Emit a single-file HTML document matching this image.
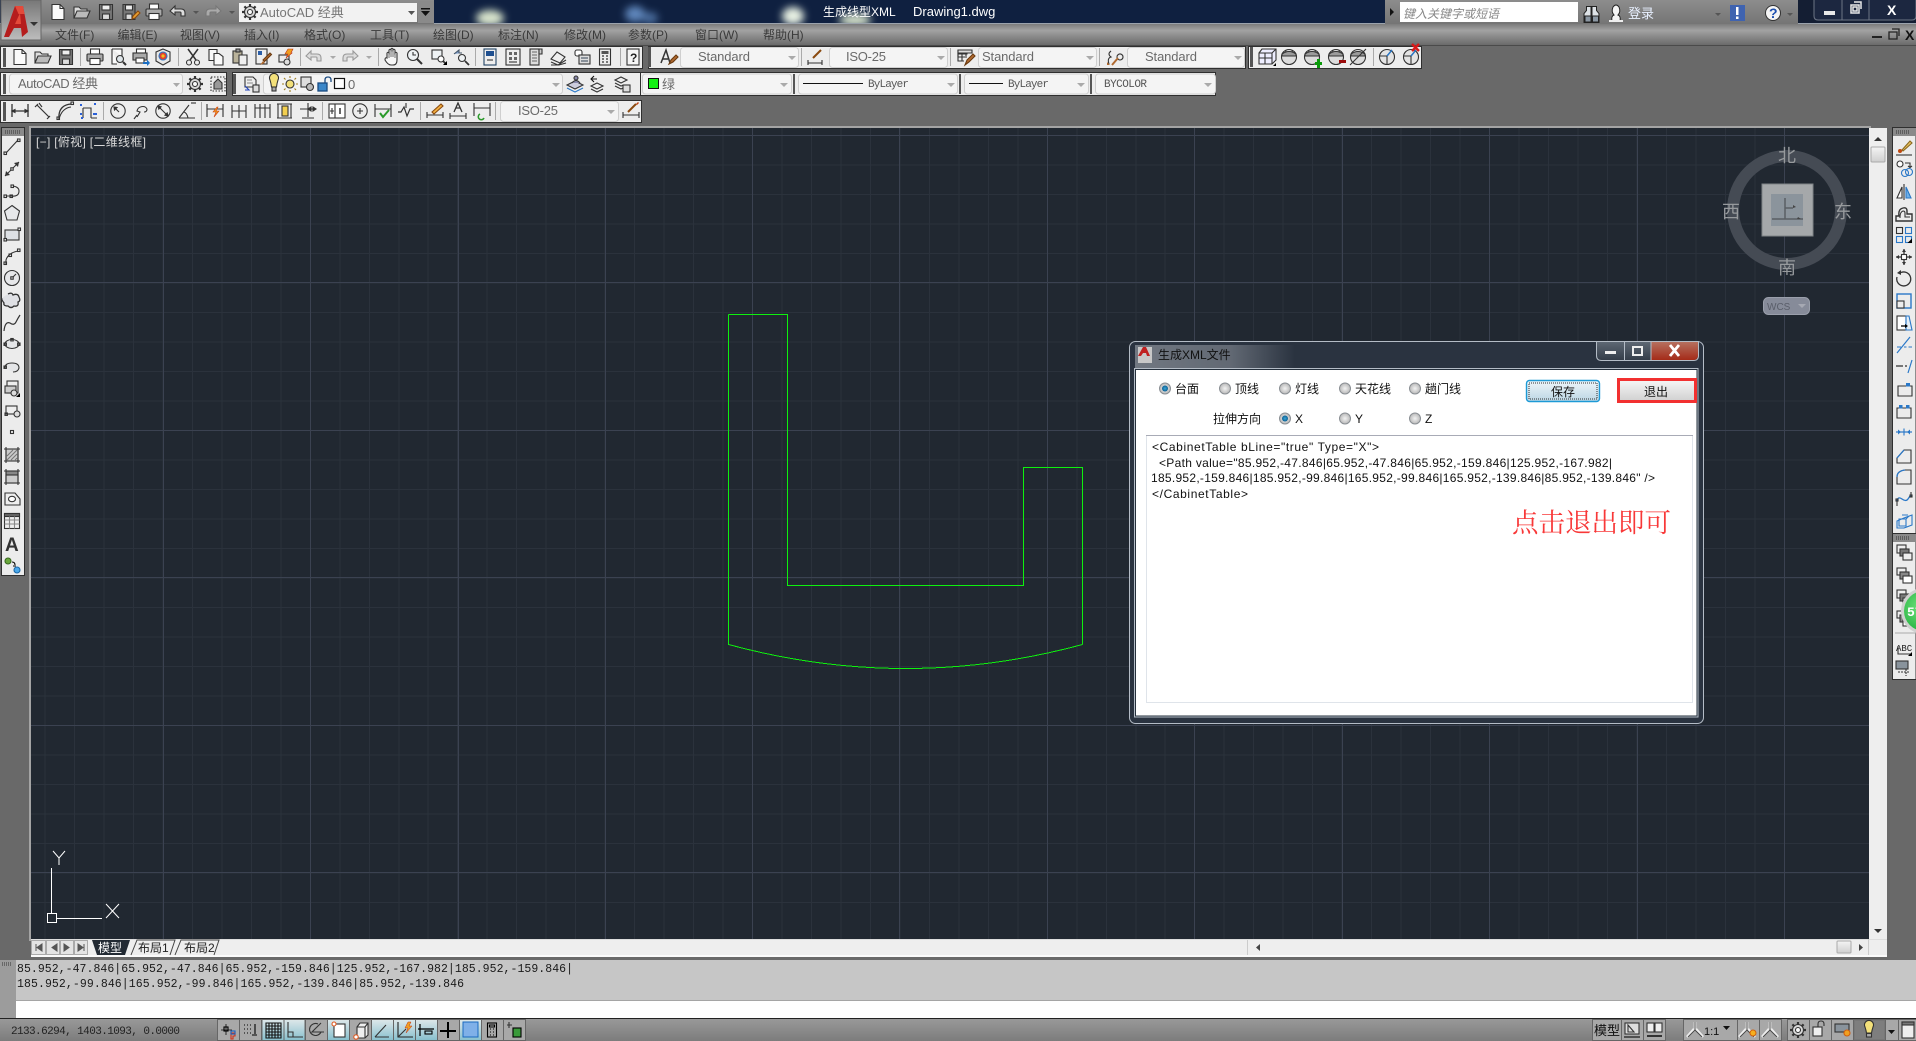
<!DOCTYPE html>
<html><head><meta charset="utf-8"><title>AutoCAD</title>
<style>
html,body{margin:0;padding:0;background:#696969;overflow:hidden}
svg{display:block}
text{font-family:"Liberation Sans","Noto Sans CJK SC",sans-serif;font-size:12px;stroke:none;white-space:pre}
.m{fill:#3a3a3a}
.c{fill:#6a6a6a;font-size:13px}
.mono{font-family:"Liberation Mono","Noto Sans CJK SC",monospace}
.i{fill:none;stroke:#333;stroke-width:1.1}
.b{fill:none;stroke:#2a78c8;stroke-width:1.2}
</style></head><body>
<svg xmlns="http://www.w3.org/2000/svg" width="1916" height="1041" viewBox="0 0 1916 1041">
<defs>
<linearGradient id="menu" x1="0" y1="0" x2="0" y2="1"><stop offset="0" stop-color="#7c7c7c"/><stop offset=".3" stop-color="#a2a2a2"/><stop offset="1" stop-color="#6a6a6a"/></linearGradient>
<linearGradient id="qat" x1="0" y1="0" x2="0" y2="1"><stop offset="0" stop-color="#8d8d8d"/><stop offset="1" stop-color="#757575"/></linearGradient>
<linearGradient id="logo" x1="0" y1="0" x2="0" y2="1"><stop offset="0" stop-color="#777"/><stop offset="1" stop-color="#bdbdbd"/></linearGradient>
<linearGradient id="st" x1="0" y1="0" x2="0" y2="1"><stop offset="0" stop-color="#9a9a9a"/><stop offset="1" stop-color="#7c7c7c"/></linearGradient>
<linearGradient id="on" x1="0" y1="0" x2="0" y2="1"><stop offset="0" stop-color="#dfe8ea"/><stop offset="1" stop-color="#86bfcd"/></linearGradient>
<linearGradient id="btn" x1="0" y1="0" x2="0" y2="1"><stop offset="0" stop-color="#f4f4f4"/><stop offset="1" stop-color="#cfcfcf"/></linearGradient>
<linearGradient id="btnb" x1="0" y1="0" x2="0" y2="1"><stop offset="0" stop-color="#eef6fa"/><stop offset="1" stop-color="#bcd6e4"/></linearGradient>
<linearGradient id="wb" x1="0" y1="0" x2="0" y2="1"><stop offset="0" stop-color="#5e6874"/><stop offset="1" stop-color="#333c48"/></linearGradient>
<linearGradient id="wr" x1="0" y1="0" x2="0" y2="1"><stop offset="0" stop-color="#b5705f"/><stop offset="1" stop-color="#a52b18"/></linearGradient>
<linearGradient id="glow" x1="0" y1="0" x2="1" y2="0"><stop offset="0" stop-color="#c8ccd2" stop-opacity=".45"/><stop offset=".6" stop-color="#c8ccd2" stop-opacity=".35"/><stop offset="1" stop-color="#c8ccd2" stop-opacity="0"/></linearGradient>
<radialGradient id="radio" cx=".5" cy=".5" r=".5"><stop offset="0" stop-color="#f2f2f2"/><stop offset="1" stop-color="#b8b8b8"/></radialGradient>
<radialGradient id="radon" cx=".5" cy=".5" r=".5"><stop offset="0" stop-color="#39a5d8"/><stop offset="1" stop-color="#0c5f92"/></radialGradient>
<radialGradient id="grn" cx=".4" cy=".4" r=".6"><stop offset="0" stop-color="#6fe07a"/><stop offset="1" stop-color="#28b544"/></radialGradient>
<filter id="bl" x="-50%" y="-50%" width="200%" height="200%"><feGaussianBlur stdDeviation="4"/></filter>

<!-- general icons centred at 0,0 -->
<g id="doc"><path d="M-6-7.5h8l4 4V7.5H-6z" fill="#fafafa"/><path d="M2-7.5v4h4"/></g>
<g id="open"><path d="M-8 6V-5h5l2 2h6v2" fill="#ddd"/><path d="M-8 6l3-7H8L5 6z" fill="#bbb"/></g>
<g id="save"><path d="M-6.5-7.5h13v15h-13z" fill="#777"/><rect x="-4" y="-7" width="8" height="5" fill="#eee"/><rect x="-3.5" y="2" width="7" height="5.5" fill="#ddd"/></g>
<g id="saveas"><path d="M-7-7.5H5v15H-7z" fill="#777"/><rect x="-4.5" y="-7" width="7" height="5" fill="#eee"/><rect x="-4" y="2" width="6" height="5.5" fill="#ddd"/><path d="M2 7l1-3 5-5 2 2-5 5z" fill="#e8a030" stroke="#8a4a10"/></g>
<g id="print"><rect x="-4.5" y="-8" width="9" height="5" fill="#fff"/><rect x="-8" y="-3" width="16" height="7" rx="1" fill="#aaa"/><rect x="-5" y="1.5" width="10" height="6" fill="#fff"/></g>
<g id="prev"><path d="M-6-8H4v7M-6-8V7h5" fill="#fafafa"/><circle cx="2" cy="2" r="3.5" fill="#dfe6ea"/><path d="M5 5l3 3" stroke-width="2"/></g>
<g id="pub"><rect x="-4.5" y="-8" width="9" height="4" fill="#fff"/><rect x="-8" y="-4" width="14" height="7" fill="#aaa"/><rect x="-5" y="1" width="8" height="5" fill="#fff"/><path d="M2 5h4V2.5L9 6 6 9V7H2z" fill="#1b6fc4" stroke="none"/></g>
<g id="p3d"><path d="M0-8l7 3v9L0 8-7 4v-9z" fill="#e8e8e8"/><circle cy="-1" r="4" fill="#e04030" stroke="#2a78c8"/><circle cy="-1" r="1.6" fill="#f0c020" stroke="none"/></g>
<g id="cut"><path d="M-5-8L3 3M5-8L-3 3" stroke-width="1.5"/><circle cx="-4" cy="5.5" r="2.5"/><circle cx="4" cy="5.5" r="2.5"/></g>
<g id="copy"><path d="M-7-7.5h8v11h-8z" fill="#fafafa"/><path d="M-2-3.5h5l4 3V8H-2z" fill="#fafafa"/></g>
<g id="paste"><rect x="-7" y="-6" width="9" height="12" fill="#b9b29a"/><rect x="-4" y="-8" width="4" height="3" fill="#999"/><path d="M-1-2h8V8h-8z" fill="#eee"/></g>
<g id="match"><rect x="-7" y="-8" width="11" height="15" fill="#eee"/><rect x="-5" y="-6" width="4" height="4" fill="#2a5ea8" stroke="none"/><path d="M0 3l7-7 1.5 1.5-7 7z" fill="#b06a30" stroke="#6a3a10"/><path d="M-3 8l3-4 2 2z" fill="#b06a30" stroke="none"/></g>
<g id="bled"><rect x="-7" y="-2" width="10" height="7"/><circle cx="1" cy="5" r="3" fill="#ddd"/><path d="M2-8L-1-3h3l-2 4 6-5H5l2-4z" fill="#f0a020" stroke="#c03010" stroke-width=".6"/></g>
<g id="und" stroke="#999"><path d="M-8-1l5-5v3h6q4 0 4 4v3h-4V1q0-1-1-1h-5v3z" fill="#ddd"/></g>
<g id="red" stroke="#999"><path d="M8-1L3-6v3H-3q-4 0-4 4v3h4V1q0-1 1-1h5v3z" fill="#ddd"/></g>
<g id="undD"><path d="M-8-1l5-5v3h6q4 0 4 4v3h-4V1q0-1-1-1h-5v3z" fill="#ddd"/></g>
<g id="redD" stroke="#777"><path d="M8-1L3-6v3H-3q-4 0-4 4v3h4V1q0-1 1-1h5v3z" fill="#aaa"/></g>
<g id="hand"><path d="M-5 1v-5q1-1.500 2 0v-3q1-1.500 2 0V-8q1-1.500 2 0v1q1-1.500 2 0v3q1-1.500 2 0V3q0 5-4 5H-1Q-4 8-7 3-7 0-5 1z" fill="#f6f6f6"/><path d="M-3-4v5M-1-7v7M1-7v7M3-4v5" stroke-width=".7"/></g>
<g id="zrt"><circle cx="-2" cy="-2" r="5.5" fill="#eef2f4"/><path d="M-2-5v3h3"/><path d="M2 2l5 5" stroke-width="2"/></g>
<g id="zwn"><rect x="-7" y="-7" width="10" height="9" fill="#eef2f4"/><circle cx="2" cy="2" r="3" fill="#fff"/><path d="M4 4l3 3" stroke-width="1.8"/><path d="M8 8V4l-4 4z" fill="#000" stroke="none"/></g>
<g id="zpr"><path d="M-7-3l5-4v3h3" fill="#7a9ac8" stroke="#456"/><circle cx="1" cy="1" r="3.5" fill="#eef2f4"/><path d="M4 4l4 4" stroke-width="1.8"/></g>
<g id="prop"><rect x="-6" y="-8" width="12" height="16" fill="#eee" stroke="#246"/><rect x="-4" y="-6" width="8" height="5" fill="#1e4f90" stroke="none"/><path d="M-3 3h6" stroke="#333"/></g>
<g id="dc"><rect x="-7" y="-8" width="14" height="16" fill="#eee"/><path d="M-4-5h3v3h-3zM1-5h3v3H1zM-4 0h3v3h-3zM1 0h3v3H1z" fill="#666" stroke="none"/><path d="M-4 5h8"/></g>
<g id="tp"><rect x="-6" y="-8" width="9" height="16" fill="#ddd"/><path d="M3-8h3v5H3z" fill="#ccc"/><path d="M-4-5h5M-4-2h5M-4 1h5M-4 4h5" stroke="#666"/></g>
<g id="sheet"><path d="M-8 2l6-7 8 5-5 6z" fill="#eee"/><path d="M-8 5l7 3 8-5" /><path d="M-8 8l8 0 7-2" /></g>
<g id="mk"><rect x="-7" y="-7" width="7" height="6" rx="2" fill="#fff"/><rect x="-3" y="-2" width="11" height="9" fill="#ddd"/><path d="M-1 1h7M-1 4h7" stroke="#345"/></g>
<g id="calc"><rect x="-5.500" y="-8" width="11" height="16" fill="#eee"/><rect x="-3.500" y="-6" width="7" height="3" fill="#555" stroke="none"/><path d="M-3-1h2M1-1h2M-3 2h2M1 2h2M-3 5h2M1 5h2" stroke-width="1.3"/></g>
<g id="help"><rect x="-6" y="-8" width="12" height="16" fill="#f5f5f5"/></g>
<g id="gear"><circle r="5.500" fill="#d8d8d8"/><circle r="2.500" fill="#fafafa"/><path d="M0-8v2.500M0 5.500V8M-8 0h2.500M5.500 0H8M-5.600-5.600l1.800 1.800M3.800 3.800l1.800 1.800M5.600-5.600L3.800-3.800M-3.800 3.800l-1.800 1.800" stroke-width="2.200"/></g>
<g id="ws"><rect x="-7" y="-7" width="14" height="14" stroke-dasharray="1.500 1.500"/><path d="M-4 5V-1l4-4 4 4v6z" fill="#999"/></g>
<g id="layer"><path d="M-7-7h8l3 3v7H-7z" fill="#eee"/><path d="M-5-4h5M-5-1h6" stroke="#888"/><path d="M-7 2l4 4-4 0" stroke="#24b"/><rect x="1" y="1" width="6" height="7" fill="#ddd"/></g>
<g id="lay2"><path d="M-8 1l8-4 8 4-8 4z" fill="#ccd"/><path d="M-8 4l8 4 8-4" stroke="#2a78c8"/><circle cx="1" cy="-6" r="2" fill="#88a"/><path d="M-3-1q4-5 8 0" fill="#88a"/></g>
<g id="lay3"><path d="M-8 2l6-3 6 3-6 3z" fill="#eee"/><path d="M-8 5l6 3 6-3"/><path d="M-8-5h6M-5-8l-3 3 3 3" stroke="#111"/></g>
<g id="lay4"><path d="M-7-4l6-3 6 3-6 3z" fill="#eee"/><path d="M-7-1l6 3 3-1M-7 2l6 3 2-1"/><rect x="1" y="1" width="7" height="7" fill="#ddd"/></g>
<!-- dim icons -->
<g id="dl"><path d="M-8-7V6M8-7V6M-8 0H8" stroke-width="1.300"/><path d="M-8 0l3-1.500v3zM8 0L5-1.500v3z" fill="#333"/></g>
<g id="da"><path d="M-8-4l3-3M4 8l3-3M-6-6L6 6" stroke-width="1.200"/><path d="M-4-8L-1-4M1 8" /></g>
<g id="dar"><path d="M-7 8V4Q-6-6 5-7" stroke-width="1.300"/><path d="M-7 8Q-4-3 5-4"/><rect x="5" y="-9" width="2.500" height="2.500"/><rect x="-9" y="6" width="2.500" height="2.500"/></g>
<g id="dor"><path d="M-6 7V-3M-6-3h8V7M2 7h6" stroke="#333"/><path d="M-8-7v2M-8 2v2M-8 7h2M6-8v2M4 3h4" stroke="#2a60d8" stroke-width="2"/></g>
<g id="drd"><circle r="7.200"/><path d="M-4-4L1 1"/><path d="M-4-4l3 .5-2.500 2.500z" fill="#333"/></g>
<g id="djo"><path d="M-4 6l3-5-3-1C-3-5 4-6 6-2M6-2q0 3-3 3"/><path d="M-7 8l3-4" /></g>
<g id="ddi"><circle r="7.200"/><path d="M-5-5L5 5"/><path d="M-5-5l3 .8-2.200 2.200zM5 5l-3-.8 2.200-2.200z" fill="#333"/></g>
<g id="dan"><path d="M-8 7H8M-8 7L2-6"/><path d="M-3 1q3 1 4 6"/><path d="M4-8h5"/></g>
<g id="dq"><path d="M-8-7V6M8-7V6M-8-2H8" /><path d="M-2-2L3-2" stroke-width="1"/><path d="M2-4l-4 5h3l-2 5 5-6H1l2-4z" fill="#f0a020" stroke="#d04010" stroke-width=".6"/></g>
<g id="db"><path d="M-7-6V7M0-6V7M7-6V7M-7 0H7"/></g>
<g id="dc2"><path d="M-7-7V7M-2-7V7M3-7V7M8-7V7M-7-3H8"/></g>
<g id="ds"><path d="M-8-7H7M-8 7H7M-7-7V7M6-7V7"/><rect x="-3" y="-5" width="6" height="10" fill="#f2cf50"/></g>
<g id="dj"><path d="M0-8V6M-6 7H6M-8-2H8"/><path d="M0-2l3-2v4zM8-2L5-4v4z" fill="#333"/></g>
<g id="tol"><rect x="-8" y="-7" width="16" height="14" fill="#fff"/><path d="M-2-7V7"/><path d="M-5-3v6M-7 0h4" /><path d="M3-3v6" stroke-width="1.500"/></g>
<g id="cen"><circle r="7.200"/><path d="M-3 0H3M0-3V3"/></g>
<g id="insp"><path d="M-8-7V6M8-7V6M-8-2H8"/><path d="M-3 2l3 4 6-7" stroke="#2a9a2a" stroke-width="2"/></g>
<g id="jog"><path d="M-8 1h3l3-5 3 9 3-7h4" stroke-width="1.200"/><path d="M0-8V-3"/></g>
<g id="ded"><path d="M-8 7V1M8 7V1M-8 4H8" /><path d="M-3 1L6-7l2 2-9 8z" fill="#f2b040" stroke="#8a4a10"/></g>
<g id="dte"><path d="M-8 8V2M8 8V2M-8 5H8"/><path d="M-4 1L0-8l4 9M-2-3h4" stroke-width="1.300"/></g>
<g id="dup"><path d="M-8-8V5M8-8V5M-8-3H8"/><path d="M-2 3a3 3 0 1 0 4 4" stroke="#2a9a2a" stroke-width="1.500"/></g>
<g id="dst"><path d="M-8 7V1M8 7V1M-8 4H8"/><path d="M-3 1L5-7" stroke="#8a4a10" stroke-width="2"/><path d="M5-7l2-2 1 1-2 2z" fill="#c04010" stroke="none"/></g>
<g id="td"><path d="M-7-7H2v4L-7-3M-7-7v7h9" /><path d="M-7-7h14v3H-7z" fill="#ddd"/><path d="M-7-4V4h6M-3-4V4M1-4v3M-7 0h6" /><path d="M0 8l2-5 6-6 2 2-6 6z" fill="#b06a30" stroke="#6a3a10"/></g>
<g id="tA"><path d="M-7 6L-2-7 2 6M-5 2h5" stroke-width="1.500"/><path d="M1 7l2-4 5-5 2 2-5 5z" fill="#b06a30" stroke="#6a3a10"/></g>
<g id="ml"><path d="M-8 8V3M6 8V3M-8 6H6"/><path d="M-3 1L5-7" stroke="#8a4a10" stroke-width="2"/></g>
<g id="mls"><path d="M-6 7q-2-6 2-7-4-3 0-6M2 0a3 3 0 1 0 0-.1"/><path d="M-3 8L3 1" stroke="#b06a30" stroke-width="2"/><path d="M-8 5l3 3-3 0" fill="#b06a30" stroke="none"/></g>
<!-- 3d orbit -->
<g id="v3"><path d="M-8-4l3-4H9v11l-4 4H-8z" fill="#eef"/><path d="M-8-4H5V7M5-4l4-4M-2-4V7M-8 1H5"/><path d="M9 9V6L6 9z" fill="#000" stroke="none"/></g>
<g id="sph"><circle r="7.500" fill="#dcdcdc"/><path d="M-7.400-2h14.800M-3-7q-1 5 0 5M3-7q1 5 0 5" /><path d="M-7-3Q0-8 7-3V-1H-7z" fill="#9b9b9b"/></g>
<g id="sphx"><circle r="7.500" fill="#dcdcdc"/><path d="M-7-3Q0-8 7-3V-1H-7z" fill="#9b9b9b"/><path d="M-8 8L8-8"/></g>
<g id="vp"><circle r="7.500" fill="#e4e4e4"/><path d="M-7-1H0V7M0-1L5-7" /><path d="M0-1L5-7" stroke="#2a78c8" stroke-width="1.400"/></g>
<!-- draw -->
<g id="a1"><path d="M-6 6L6-7"/><rect x="-8" y="5" width="2.500" height="2.500"/><rect x="5.500" y="-8" width="2.500" height="2.500"/></g>
<g id="a2"><path d="M-7 7L7-7" /><path d="M7-7l-5 1 4 4zM-7 7l1-5 4 4z" fill="#333" stroke="none"/><rect x="-1.200" y="-1.200" width="2.400" height="2.400" fill="#eee"/></g>
<g id="a3"><path d="M-6 4H-1Q7 5 7-1 7-5 1-6"/><rect x="-8" y="3" width="2.500" height="2.500"/><rect x="-2" y="3" width="2.500" height="2.500"/><rect x="-1" y="-7" width="2.500" height="2.500"/></g>
<g id="a4"><path d="M0-7.500L7.500-2 5 7H-5L-7.500-2z" fill="#e7e8ea"/></g>
<g id="a5"><rect x="-7" y="-5" width="14" height="10" fill="#dde0e4"/><rect x="-8" y="3.500" width="2.500" height="2.500" fill="#eee"/><rect x="6" y="-7" width="2.500" height="2.500" fill="#eee"/></g>
<g id="a6"><path d="M-6 7V3Q-4-4 6-6"/><rect x="-8" y="5" width="2.500" height="2.500"/><rect x="5.500" y="-8" width="2.500" height="2.500"/><rect x="-3" y="-3" width="2.500" height="2.500"/></g>
<g id="a7"><circle r="7.500" fill="#e6e7e9"/><rect x="-1.200" y="-1.200" width="2.400" height="2.400"/><path d="M1 -1L4-4"/></g>
<g id="a8"><path d="M-4-7q4-2 5 1 5-2 6 2 2 4-1 5 1 5-4 4-3 3-6 0-5 0-4-3-3-4-2-5 2-3z" fill="#dfe0e4" stroke-width="1.300"/></g>
<g id="a9"><path d="M-8 8Q-7-2-2 0 2 3 4-1T8-8" stroke-width="1.200"/></g>
<g id="a10"><ellipse rx="7" ry="4.500" fill="#e4e5e7"/><rect x="-1.200" y="-5.500" width="2.400" height="2.400"/><rect x="-8" y="-1" width="2.400" height="2.400"/><rect x="5.600" y="-1" width="2.400" height="2.400"/></g>
<g id="a11"><path d="M-7 1Q-7-4 0-4T7 1Q6 5 1 5" fill="#e4e5e7"/><rect x="-8" y="-1" width="2.400" height="2.400"/></g>
<g id="a12"><rect x="-5" y="-8" width="11" height="12" fill="#eee"/><rect x="-7" y="-3" width="11" height="7" fill="#ccc"/><circle cx="2" cy="4" r="3" fill="#ddd"/><path d="M8 8V4L4 8z" fill="#000" stroke="none"/></g>
<g id="a13"><rect x="-6" y="-6" width="11" height="8" fill="#eee"/><circle cx="5" cy="2" r="3" fill="#ddd"/><rect x="-7" y="1" width="2.400" height="2.400"/></g>
<g id="a14"><rect x="-1.500" y="-1.500" width="3" height="3"/></g>
<g id="a15"><rect x="-6" y="-6" width="12" height="12" fill="#ccc"/><path d="M-5 1l6-6M-5 5L5-5M-1 5l6-6M3 5l2-2" stroke="#777"/><path d="M-8-6H8M-8 6H8M-6-8V8M6-8V8"/></g>
<g id="a16"><rect x="-6" y="-6" width="12" height="12" fill="#888"/><rect x="-6" y="-2" width="12" height="8" fill="#ccc"/><path d="M-8-6H8M-8 6H8M-6-8V8M6-8V8"/></g>
<g id="a17"><path d="M-7-6H3l5 6v6H-7z" fill="#eee"/><ellipse rx="3.500" ry="2.700" fill="#fff"/></g>
<g id="a18"><rect x="-7.500" y="-7.500" width="15" height="15" fill="#eee"/><rect x="-7.500" y="-7.500" width="15" height="3" fill="#666"/><path d="M-7.500-1h15M-7.500 3h15M-2.500-4.500v12M2.500-4.500v12" stroke="#888"/></g>
<g id="a20"><circle cx="-4" cy="-4" r="3" fill="#69a83c" stroke="#3a6a20"/><path d="M0-3q3 0 3 3M1 1h3" stroke="#000"/><circle cx="5" cy="5" r="3" fill="#4aa8ea" stroke="#1a68a8"/></g>
<!-- modify (right bar) -->
<g id="b1"><path d="M-2 3L6-6l2 2-9 8z" fill="#e8c060" stroke="#8a6a20"/><circle cx="-4" cy="4" r="2" fill="#c04810" stroke="none"/><path d="M-8 8H8"/></g>
<g id="b2"><circle cx="-4" cy="-5" r="3" fill="#fff"/><path d="M1-6H6V-2M4-3l2 1.500 2-1.500" /><g stroke="#2a78c8"><circle cx="1" cy="4" r="3.500"/><circle cx="5" cy="3" r="3.500"/></g></g>
<g id="b3"><path d="M0-8V8"/><path d="M-2-5L-7 6h5z" fill="#fff"/><path d="M2-5L7 6H2z" fill="#6fb0e6" stroke="#2a78c8"/></g>
<g id="b4"><path d="M-8 7V2h3q-1-7 4-8 4-1 4 3v3h5v7z" fill="none" stroke-width="1.400"/><path d="M-4 4v-1q0-5 3-6 2 0 2 2v4h5"/></g>
<g id="b5"><rect x="-7.500" y="-7.500" width="6" height="6"/><rect x="1.500" y="-7.500" width="6" height="6" stroke="#2a78c8"/><rect x="-7.500" y="1.500" width="6" height="6" stroke="#2a78c8"/><rect x="1.500" y="1.500" width="6" height="6" stroke="#2a78c8"/><path d="M8 8V3.500L3.500 8z" fill="#000" stroke="none"/></g>
<g id="b6"><path d="M0-8V8M-8 0H8" stroke-width="1.300"/><path d="M0-8l-2 3h4zM0 8l-2-3h4zM-8 0l3-2v4zM8 0L5-2v4z" fill="#333" stroke="none"/><rect x="-2.500" y="-2.500" width="5" height="5" fill="#fff"/></g>
<g id="b7"><path d="M-3-6.500A7 7 0 1 1-7-2" stroke-width="1.300"/><path d="M-3-9v5l-4-2z" fill="#333" stroke="none"/></g>
<g id="b8"><rect x="-7" y="-7" width="14" height="14" stroke="#2a78c8" stroke-width="1.400"/><rect x="-7" y="0" width="7" height="7" fill="#eee"/></g>
<g id="b9"><rect x="-7" y="-7" width="9" height="14" fill="#fff"/><path d="M2-7H5L8 7H2z" fill="#e5eef6" stroke="#2a78c8"/><path d="M-3 3H3" stroke="#000" stroke-width="1.300"/><path d="M4 3L1 1v4z" fill="#000" stroke="none"/></g>
<g id="b10"><path d="M-7 8L6-8" stroke="#2a78c8" stroke-width="1.200"/><path d="M-7 2h4M0 2h2.500M4.500 2H8" stroke="#2a78c8"/></g>
<g id="b11"><path d="M-8-1H-1M1-1H3" stroke="#000"/><path d="M4 6L8-7" stroke="#2a78c8" stroke-width="1.200"/></g>
<g id="b12"><path d="M-6 7V-3H8V7z" /><rect x="2" y="-6" width="4" height="3.500" fill="#2a78c8" stroke="none"/></g>
<g id="b13"><path d="M-7 7V-3H7V7z"/><rect x="-5" y="-6" width="3.500" height="3.500" fill="#2a78c8" stroke="none"/><rect x="2" y="-6" width="3.500" height="3.500" fill="#2a78c8" stroke="none"/></g>
<g id="b14"><path d="M-8 0H8" stroke="#2a78c8" stroke-width="1.200"/><path d="M-3 0l-3-2.500v5zM3 0L6-2.500v5z" fill="#2a78c8" stroke="none"/><path d="M0-3.500V3.500" stroke="#2a78c8"/></g>
<g id="b15"><path d="M-7 2L0-6H7V7H-7z"/><path d="M-7 2L0-6" stroke="#2a78c8" stroke-width="1.300"/></g>
<g id="b16"><path d="M-7 7V0Q-7-6 1-7H7V7z"/><path d="M-7 0Q-7-6 1-7" stroke="#2a78c8" stroke-width="1.300"/></g>
<g id="b17"><path d="M-7 7V2M7-7V-2" /><path d="M-7 2Q-6-3-2 0T4 0 7-4" stroke="#2a78c8" stroke-width="1.300"/><rect x="-8" y="0" width="2" height="2"/><rect x="6" y="-4" width="2" height="2"/></g>
<g id="b18" stroke="#2a78c8"><path d="M-7 0L0-3 8-6V4L0 7-7 7z"/><path d="M-5-2h7v7h-7zM2-2l3-3M-2-6h6"/></g>
<g id="c1"><rect x="-7" y="-7" width="9" height="8" fill="#eee"/><rect x="-4" y="-3" width="9" height="7" fill="#777"/><rect x="-1" y="1" width="9" height="7" fill="#eee"/></g>
<g id="c2"><rect x="-7" y="-7" width="9" height="7" fill="#eee"/><rect x="-4" y="-3" width="9" height="7" fill="#888"/><rect x="-1" y="1" width="9" height="7" fill="#fff"/></g>
<g id="c5"><path d="M-6-2V6H7" /><path d="M8 8V4L4 8z" fill="#000" stroke="none"/></g>
<g id="c6"><rect x="-8" y="-7" width="12" height="8" fill="#89939c"/><path d="M-6 4h12M2 1v7" stroke-dasharray="2 1"/></g>
<!-- status -->
<g id="s1"><path d="M-7 0H4M-2-6V5"/><rect x="-4" y="-3" width="4" height="4" stroke="#000"/><path d="M3 3h4v3H5v3H3z" fill="none" stroke="#d03018"/><rect x="3" y="1" width="4" height="3" stroke="#1a60c0"/></g>
<g id="s2"><path d="M-6-5h1M-3-5h1M0-5h1M-6-1h1M-3-1h1M0-1h1M-6 3h1M-3 3h1M0 3h1" stroke="#000"/><path d="M5-6V4M2 5h5" stroke="#000"/></g>
<g id="s3"><path d="M-7-7H8V8H-7zM-4-7V8M-1-7V8M2-7V8M5-7V8M-7-4H8M-7-1H8M-7 2H8M-7 5H8" stroke="#111"/></g>
<g id="s4"><path d="M-7-8V7H8M-7 2H-2V7"/></g>
<g id="s5"><path d="M2-6A6 6 0 1 0 5 2" /><path d="M5-7L-4 2H8" /></g>
<g id="s6"><rect x="-5" y="-6" width="11" height="13" fill="#fff"/><circle cx="-5" cy="-6" r="2" stroke="#e05a20" fill="#fff"/></g>
<g id="s7"><path d="M-4-3l3-4H7V5L4 8H-4z" fill="#eee"/><path d="M-4-3H4V8M4-3l3-4"/><circle cx="-5" cy="7" r="2.200" stroke="#e05a20" fill="#fff"/></g>
<g id="s8"><path d="M-7 7H7M-7 7L4-5"/></g>
<g id="s9"><path d="M-7-8V7H8" stroke="#222"/><path d="M-7 7L1-1"/><path d="M3-8L0-2h3l-2 5 6-7H4l2-4z" fill="#f0a020" stroke="#c03010" stroke-width=".5"/></g>
<g id="s10"><path d="M-6-6V6M-8-1H8" stroke="#000" stroke-width="1.200"/><rect x="-1" y="1" width="7" height="3" stroke="#000"/></g>
<g id="s11"><path d="M0-8V8M-8 1H8" stroke="#000" stroke-width="2"/></g>
<g id="s13"><rect x="-4.500" y="-7" width="9" height="14" stroke="#000"/><path d="M-2.500-5h5v2h-5zM-2-1h1M1-1h1M-2 2h1M1 2h1M-2 5h1M1 5h1" stroke="#000"/></g>
<g id="s14"><path d="M-7-5h5M-5-8v6" stroke="#333"/><rect x="-1" y="-2" width="8" height="9" stroke="#000" fill="#3a9a3a"/></g>
<g id="an"><path d="M0-8L0-1M-1-1L-8 7M1-1L8 7" stroke-width="2.600" stroke="#eee"/><path d="M0-8V0L-7 7M0 0L7 7" stroke="#444" stroke-width=".9"/></g>
<g id="bulb"><path d="M-4-3a4.500 4.500 0 1 1 8 0Q3 0 2.500 3h-5Q-3 0-4-3z" fill="#f3e07a"/><rect x="-2.500" y="3.500" width="5" height="3.500" fill="#aaa"/></g>
</defs>

<rect width="1916" height="1041" fill="#696969"/>

<!-- title bar -->
<rect width="1916" height="24" fill="#0f2040"/>
<g filter="url(#bl)"><ellipse cx="490" cy="18" rx="14" ry="8" fill="#d8e4cc"/><ellipse cx="635" cy="14" rx="10" ry="8" fill="#5f86bb"/><ellipse cx="650" cy="18" rx="8" ry="6" fill="#4a6c9c"/><ellipse cx="793" cy="16" rx="11" ry="9" fill="#e6efe2"/><ellipse cx="855" cy="20" rx="16" ry="6" fill="#d8e4cc"/></g>
<rect x="1798" y="0" width="118" height="24" fill="#141e33"/>
<rect y="23" width="1916" height="1" fill="#9aa2ac"/>
<rect x="1" y="0" width="433" height="24" fill="url(#qat)"/>
<rect x="239" y="3" width="178" height="19" fill="#f2f2f2"/>
<g class="i"><use href="#doc" x="58" y="12"/><use href="#open" x="82" y="12"/><use href="#save" x="106" y="12"/><use href="#saveas" x="130" y="12"/><use href="#print" x="154" y="12"/><use href="#undD" x="178" y="12"/><use href="#redD" x="213" y="12"/><use href="#gear" x="250" y="12"/></g>
<path d="M193 11h6l-3 3zM229 11h6l-3 3zM408 11h7l-3.500 4z" fill="#555"/>
<rect x="418" y="1" width="16" height="22" fill="#8a8a8a"/><path d="M421 8h9v1.500h-9zM421 11h9l-4.500 5z" fill="#111"/>
<text x="260" y="17" fill="#777" style="font-size:13px">AutoCAD 经典</text>
<text x="823" y="16" fill="#fff">生成线型XML</text>
<text x="913" y="16" fill="#fff" style="font-size:13px">Drawing1.dwg</text>

<!-- infocenter -->
<rect x="1385" y="0" width="413" height="24" fill="url(#qat)"/>
<path d="M1390 8l4 4-4 4z" fill="#111"/>
<rect x="1400" y="2" width="178" height="20" fill="#fff"/>
<text x="1403" y="18" fill="#888" font-style="italic">键入关键字或短语</text>
<g stroke="#222" stroke-width="1"><path d="M1584 22.500v-9l2.500-3v-4h4.500v16z" fill="#dde2e6"/><path d="M1592 22.500v-16h4.500v4l2.500 3v9z" fill="#dde2e6"/><rect x="1585" y="16" width="6" height="6" fill="#8b97a3"/><rect x="1592.500" y="16" width="6" height="6" fill="#8b97a3"/><path d="M1612 21q-1-5 2-6-3-3-1-8 3-4 6 0 2 5-1 8 3 1 2 6z" fill="#f4f4f4"/></g>
<rect x="1609" y="20" width="14" height="2" fill="#eee"/>
<text x="1628" y="18" fill="#e8f0ff" style="font-size:13px">登录</text>
<path d="M1715 13h6l-3 3zM1787 13h6l-3 3z" fill="#555"/>
<rect x="1730" y="5" width="15" height="16" fill="#3f63b0"/><rect x="1736" y="7" width="2.500" height="8" fill="#fff"/><rect x="1736" y="16.500" width="2.500" height="2.500" fill="#fff"/>
<circle cx="1773" cy="13" r="7.500" fill="#f4f4f4" stroke="#333"/><text x="1769" y="18" fill="#1d4fb0" style="font-size:14px;font-weight:bold">?</text>
<!-- window controls -->
<path d="M1814 0v16q0 4 4 4h94q4 0 4-4V0" fill="#1c2740" stroke="#6d7585"/>
<path d="M1842 0v20M1869 0v20" stroke="#6d7585"/>
<rect x="1824" y="11" width="11" height="4" fill="#e8e8e8"/>
<path d="M1851 5h8v8h-8zM1854 2h7v7" fill="none" stroke="#e8e8e8" stroke-width="1.500"/><rect x="1853" y="7" width="4" height="4" fill="none" stroke="#e8e8e8" stroke-width="1.500"/>
<text x="1887" y="15" fill="#fff" style="font-size:14px;font-weight:bold">X</text>

<!-- menu bar -->
<rect y="24" width="1916" height="21" fill="url(#menu)"/>
<rect y="45" width="1916" height="1" fill="#4a4a4a"/>
<g class="m">
<text x="55" y="39">文件(F)</text><text x="117.500" y="39">编辑(E)</text><text x="180" y="39">视图(V)</text><text x="244" y="39">插入(I)</text><text x="304" y="39">格式(O)</text><text x="370" y="39">工具(T)</text><text x="433" y="39">绘图(D)</text><text x="498" y="39">标注(N)</text><text x="564" y="39">修改(M)</text><text x="628" y="39">参数(P)</text><text x="695" y="39">窗口(W)</text><text x="763" y="39">帮助(H)</text>
</g>
<rect x="1872" y="36" width="10" height="2" fill="#222"/>
<path d="M1889 32h8v7h-8zM1892 29h7v7" fill="none" stroke="#222" stroke-width="1.300"/>
<text x="1905" y="40" fill="#111" style="font-size:14px;font-weight:bold">X</text>

<!-- logo -->
<rect x="1" y="0" width="40" height="40" fill="url(#logo)" stroke="#666"/>
<path d="M4 37L15 6h8l5 26-6 5-1-9h-7l-5 9z" fill="#b51d1d"/>
<path d="M15 6h8l1.500 8h-6zM15 24l5-11 1 11z" fill="#e44a3a"/>
<path d="M30 22h8l-4 4z" fill="#333"/>

<!-- toolbar backgrounds -->
<g fill="#ededed" stroke="#2f2f2f">
<rect x="0.500" y="46.500" width="642" height="22"/>
<rect x="648.500" y="46.500" width="597" height="22"/>
<rect x="1248.500" y="46.500" width="173" height="22"/>
<rect x="0.500" y="72.500" width="226" height="23"/>
<rect x="232.500" y="72.500" width="410" height="23"/>
<rect x="640.500" y="72.500" width="575" height="23"/>
<rect x="0.500" y="100.500" width="641" height="22"/>
</g>
<!-- grips -->
<g fill="#555"><rect x="3" y="48" width="3" height="19"/><rect x="648" y="47" width="3" height="20"/><rect x="1250" y="47" width="3" height="20"/><rect x="3" y="74" width="3" height="20"/><rect x="233" y="74" width="3" height="20"/><rect x="3" y="102" width="3" height="19"/><rect x="793" y="74" width="2" height="20"/><rect x="959" y="74" width="2" height="20"/><rect x="1090" y="74" width="2" height="20"/></g>
<!-- separators -->
<path d="M80.500 48v18M178.500 48v18M300.500 48v18M378.500 48v18M475.500 48v18M620.500 48v18M801.500 48v18M950.500 48v18M1099.500 48v18M1373.500 48v18M103.500 102v18M201.500 102v18M322.500 102v18M420.500 102v18M495.500 102v18" stroke="#aaa"/>
<!-- combos -->
<g fill="#f4f4f4" stroke="#cfcfcf">
<rect x="680.500" y="47.500" width="118" height="20" rx="3"/><rect x="829.500" y="47.500" width="118" height="20" rx="3"/><rect x="978.500" y="47.500" width="118" height="20" rx="3"/><rect x="1127.500" y="47.500" width="117" height="20" rx="3"/>
<rect x="9.500" y="74" width="173" height="20" rx="3"/><rect x="263.500" y="74" width="299" height="20" rx="3"/>
<rect x="642.500" y="74" width="149" height="20" rx="3"/><rect x="798.500" y="74" width="159" height="20" rx="3"/><rect x="964.500" y="74" width="124" height="20" rx="3"/><rect x="1095.500" y="74" width="120" height="20" rx="3"/>
<rect x="500.500" y="101.500" width="118" height="20" rx="3"/>
</g>
<path d="M788 56h8l-4 4zM937 56h8l-4 4zM1086 56h8l-4 4zM1234 56h8l-4 4zM173 83h7l-3.500 4zM552 83h8l-4 4zM780 83h8l-4 4zM947 83h8l-4 4zM1077 83h8l-4 4zM1204 83h8l-4 4zM607 110h8l-4 4z" fill="#aaa"/>
<text x="698" y="61" class="c" textLength="52">Standard</text><text x="846" y="61" class="c" textLength="40">ISO-25</text><text x="982" y="61" class="c" textLength="52">Standard</text><text x="1145" y="61" class="c" textLength="52">Standard</text>
<text x="18" y="88" class="c" textLength="80">AutoCAD 经典</text>
<text x="348" y="89" class="c">0</text>
<rect x="648.500" y="78.500" width="10" height="10" fill="#14f014" stroke="#111"/>
<text x="662" y="89" class="c">绿</text>
<path d="M803 83.500h60M969 83.500h34" stroke="#111"/>
<text x="868" y="87" class="mono" fill="#555" style="font-size:11px" textLength="41">ByLayer</text>
<text x="1008" y="87" class="mono" fill="#555" style="font-size:11px" textLength="41">ByLayer</text>
<text x="1104" y="87" class="mono" fill="#555" style="font-size:11px" textLength="43">BYCOLOR</text>
<text x="518" y="115" class="c" textLength="40">ISO-25</text>

<!-- toolbar 1 icons -->
<g class="i">
<use href="#doc" x="20" y="57"/><use href="#open" x="43" y="57"/><use href="#save" x="66" y="57"/><use href="#print" x="95" y="57"/><use href="#prev" x="118" y="57"/><use href="#pub" x="141" y="57"/><use href="#p3d" x="163" y="57"/><use href="#cut" x="193" y="57"/><use href="#copy" x="216" y="57"/><use href="#paste" x="240" y="57"/><use href="#match" x="263" y="57"/><use href="#bled" x="286" y="57"/><use href="#und" x="314" y="57"/><use href="#red" x="350" y="57"/><use href="#hand" x="392" y="57"/><use href="#zrt" x="415" y="57"/><use href="#zwn" x="439" y="57"/><use href="#zpr" x="461" y="57"/><use href="#prop" x="490" y="57"/><use href="#dc" x="513" y="57"/><use href="#tp" x="536" y="57"/><use href="#sheet" x="559" y="57"/><use href="#mk" x="582" y="57"/><use href="#calc" x="605" y="57"/><use href="#help" x="633" y="57"/>
<use href="#tA" x="668" y="57"/><use href="#ml" x="816" y="57"/><use href="#td" x="965" y="57"/><use href="#mls" x="1115" y="57"/>
<use href="#v3" x="1267" y="57"/><use href="#sph" x="1289" y="57"/><use href="#sph" x="1312" y="57"/><use href="#sph" x="1336" y="57"/><use href="#sphx" x="1358" y="57"/><use href="#vp" x="1387" y="57"/><use href="#vp" x="1411" y="57"/>
</g>
<text x="630" y="62" style="font-weight:bold" fill="#222">?</text>
<path d="M330 56h6l-3 3zM366 56h6l-3 3z" fill="#aaa"/>
<path d="M1315 62h2v-3h3v3h2v3h-2v3h-3v-3h-2z" fill="#0a9a0a"/><rect x="1339" y="60" width="7" height="3" fill="#9a0a0a"/>
<path d="M1412 44l7 7M1419 44l-7 7" stroke="#d81818" stroke-width="2.400"/>

<!-- toolbar 2 icons -->
<g class="i">
<use href="#gear" x="195" y="84"/><use href="#ws" x="218" y="84"/><use href="#layer" x="252" y="84"/>
<use href="#lay2" x="575" y="84"/><use href="#lay3" x="599" y="84"/><use href="#lay4" x="622" y="84"/>
</g>
<g transform="translate(274 84)" class="i"><path d="M-4-4a4.500 4.500 0 1 1 8 0Q3-1 2.500 3h-5Q-3-1-4-4z" fill="#f3e07a"/><rect x="-2" y="3" width="4" height="4" fill="#aaa"/></g>
<g transform="translate(290 84)" class="i"><circle r="4" fill="#f3e07a"/><path d="M0-8v2M0 6v2M-8 0h2M6 0h2M-6-6l1.500 1.500M4.500 4.500L6 6M6-6L4.500-4.500M-4.500 4.500L-6 6" stroke="#a08020"/></g>
<g transform="translate(307 84)" class="i" stroke="#999"><rect x="-6" y="-7" width="10" height="10" fill="#ddd"/><circle cx="3" cy="3" r="3.500" fill="#bbb"/></g>
<g transform="translate(324 84)" stroke="#1a4a80" fill="none" stroke-width="1.300"><rect x="-6" y="-1" width="9" height="8" fill="#3a86c8"/><path d="M1-1v-3q0-3 3-3t3 3v2"/></g>
<rect x="334.500" y="78.500" width="10" height="10" fill="#fff" stroke="#111" stroke-width="1.200"/>

<!-- toolbar 3 icons -->
<g class="i">
<use href="#dl" x="20" y="111"/><use href="#da" x="43" y="111"/><use href="#dar" x="66" y="111"/><use href="#dor" x="89" y="111"/><use href="#drd" x="118" y="111"/><use href="#djo" x="141" y="111"/><use href="#ddi" x="163" y="111"/><use href="#dan" x="187" y="111"/><use href="#dq" x="215" y="111"/><use href="#db" x="239" y="111"/><use href="#dc2" x="262" y="111"/><use href="#ds" x="285" y="111"/><use href="#dj" x="308" y="111"/><use href="#tol" x="337" y="111"/><use href="#cen" x="360" y="111"/><use href="#insp" x="383" y="111"/><use href="#jog" x="406" y="111"/><use href="#ded" x="435" y="111"/><use href="#dte" x="458" y="111"/><use href="#dup" x="482" y="111"/><use href="#dst" x="631" y="111"/>
</g>

<!-- canvas -->
<rect x="29" y="126" width="1842" height="815" fill="#a4a4a4"/>
<rect x="31" y="128" width="1838" height="811" fill="#212831"/>
<clipPath id="cv"><rect x="31" y="128" width="1838" height="811"/></clipPath>
<g clip-path="url(#cv)" fill="none" shape-rendering="crispEdges">
<path stroke="#2b323c" d="M45 128v811m29.480-811v811m29.480-811v811m29.480-811v811m29.480-811v811m29.480-811v811m29.480-811v811m29.480-811v811m29.480-811v811m29.480-811v811m29.480-811v811m29.480-811v811m29.480-811v811m29.480-811v811m29.480-811v811m29.480-811v811m29.480-811v811m29.480-811v811m29.480-811v811m29.480-811v811m29.480-811v811m29.480-811v811m29.480-811v811m29.480-811v811m29.480-811v811m29.480-811v811m29.480-811v811m29.480-811v811m29.480-811v811m29.480-811v811m29.480-811v811m29.480-811v811m29.480-811v811m29.480-811v811m29.480-811v811m29.480-811v811m29.480-811v811m29.480-811v811m29.480-811v811m29.480-811v811m29.480-811v811m29.480-811v811m29.480-811v811m29.480-811v811m29.480-811v811m29.480-811v811m29.480-811v811m29.480-811v811m29.480-811v811m29.480-811v811m29.480-811v811m29.480-811v811m29.480-811v811m29.480-811v811m29.480-811v811m29.480-811v811m29.480-811v811m29.480-811v811m29.480-811v811"/>
<path stroke="#2b323c" d="M30 135.500h1839m-1839 29.500h1839m-1839 29.500h1839m-1839 29.500h1839m-1839 29.500h1839m-1839 29.500h1839m-1839 29.500h1839m-1839 29.500h1839m-1839 29.500h1839m-1839 29.500h1839m-1839 29.500h1839m-1839 29.500h1839m-1839 29.500h1839m-1839 29.500h1839m-1839 29.500h1839m-1839 29.500h1839m-1839 29.500h1839m-1839 29.500h1839m-1839 29.500h1839m-1839 29.500h1839m-1839 29.500h1839m-1839 29.500h1839m-1839 29.500h1839m-1839 29.500h1839m-1839 29.500h1839m-1839 29.500h1839m-1839 29.500h1839"/>
<path stroke="#3b4251" d="M163.500 128v811M310.500 128v811M458.500 128v811M605.500 128v811M752.500 128v811M899.500 128v811M1047.500 128v811M1194.500 128v811M1342.500 128v811M1489.500 128v811M1637.500 128v811M1784.500 128v811M30 135.500h1839M30 282.500h1839M30 430.500h1839M30 577.500h1839M30 725.500h1839M30 872.500h1839"/>
</g>
<!-- view label -->
<text x="36" y="146" fill="#d8d8d8" style="font-size:12px" textLength="110">[−] [俯视] [二维线框]</text>
<!-- shape -->
<path d="M728.500 314.500H787.500V585.500H1023.500V467.500H1082.500V644.500" fill="none" stroke="#0ef00e" stroke-width="1" shape-rendering="crispEdges"/>
<path d="M728.500 314.500V644.500Q905.500 692.500 1082.500 644.500" fill="none" stroke="#0ef00e" stroke-width="1" shape-rendering="crispEdges"/>

<!-- viewcube -->
<circle cx="1787" cy="210" r="54" fill="none" stroke="#454b54" stroke-width="12"/>
<rect x="1762" y="184" width="51" height="52" fill="#a5a8aa" stroke="#7f8387"/>
<rect x="1771" y="194" width="32" height="32" fill="#8b949c"/>
<path d="M1772 219h31M1785 198v21M1785 208h8" stroke="#5a5f64" stroke-width="1.500" fill="none"/>
<path d="M1793 205l3 2-3 1zM1798 217l3 2h-4z" fill="#444"/>
<text x="1778" y="162" fill="#979a9d" style="font-size:18px">北</text>
<text x="1778" y="274" fill="#979a9d" style="font-size:18px">南</text>
<text x="1722" y="218" fill="#979a9d" style="font-size:18px">西</text>
<text x="1834" y="218" fill="#979a9d" style="font-size:18px">东</text>
<rect x="1763.500" y="297.500" width="46" height="17" rx="5" fill="#868b99" stroke="#9a9fab"/>
<text x="1767" y="310" fill="#5a5e6a" style="font-size:10px">WCS</text>
<path d="M1798 304h8l-4 4z" fill="#a6a9b3"/>

<!-- UCS -->
<path d="M51.500 868v45M56 918.500h46" stroke="#fff" fill="none"/>
<rect x="47.500" y="913.500" width="9" height="9" fill="none" stroke="#fff"/>
<path d="M106 904l13 14M119 904l-13 14M53 851l6 7 6-7M59 858v7" stroke="#fff" fill="none"/>

<!-- left toolbar -->
<rect x="1.500" y="127.500" width="23" height="448" fill="#ececec" stroke="#2f2f2f"/>
<rect x="2" y="128" width="22" height="8" fill="#8a8a8a"/>
<path d="M5 131h16M5 133h16" stroke="#333" stroke-dasharray="1 1"/>
<g class="i">
<use href="#a1" x="12" y="147"/><use href="#a2" x="12" y="169"/><use href="#a3" x="12" y="192"/><use href="#a4" x="12" y="213"/><use href="#a5" x="12" y="235"/><use href="#a6" x="12" y="257"/><use href="#a7" x="12" y="278"/><use href="#a8" x="12" y="301"/><use href="#a9" x="12" y="323"/><use href="#a10" x="12" y="344"/><use href="#a11" x="12" y="367"/><use href="#a12" x="12" y="389"/><use href="#a13" x="12" y="412"/><use href="#a14" x="12" y="432"/><use href="#a15" x="12" y="455"/><use href="#a16" x="12" y="477"/><use href="#a17" x="12" y="499"/><use href="#a18" x="12" y="521"/><use href="#a20" x="12" y="565"/>
</g>
<text x="5" y="551" fill="#333" style="font-size:19px;font-weight:bold">A</text>

<!-- vertical scrollbar -->
<rect x="1869" y="128" width="18" height="827" fill="#eee"/>
<path d="M1874 141h8l-4-4z" fill="#333"/>
<rect x="1871" y="147" width="14" height="15" rx="1" fill="url(#btn)" stroke="#aaa"/>
<path d="M1874 929h8l-4 4z" fill="#333"/>

<!-- right toolbar -->
<rect x="1892.500" y="127.500" width="23.500" height="406" fill="#ececec" stroke="#2f2f2f"/>
<rect x="1893" y="128" width="23" height="8" fill="#8a8a8a"/>
<path d="M1896 131h14M1896 133h14" stroke="#333" stroke-dasharray="1 1"/>
<g class="i">
<use href="#b1" x="1904" y="147"/><use href="#b2" x="1904" y="169"/><use href="#b3" x="1904" y="192"/><use href="#b4" x="1904" y="214"/><use href="#b5" x="1904" y="235"/><use href="#b6" x="1904" y="257"/><use href="#b7" x="1904" y="279"/><use href="#b8" x="1904" y="301"/><use href="#b9" x="1904" y="323"/><use href="#b10" x="1904" y="345"/><use href="#b11" x="1904" y="367"/><use href="#b12" x="1904" y="389"/><use href="#b13" x="1904" y="411"/><use href="#b14" x="1904" y="432"/><use href="#b15" x="1904" y="456"/><use href="#b16" x="1904" y="477"/><use href="#b17" x="1904" y="499"/><use href="#b18" x="1904" y="521"/>
</g>
<rect x="1892.500" y="533.500" width="23.500" height="146" fill="#ececec" stroke="#2f2f2f"/>
<rect x="1893" y="534" width="23" height="8" fill="#8a8a8a"/>
<path d="M1896 537h14M1896 539h14" stroke="#333" stroke-dasharray="1 1"/>
<g class="i"><use href="#c1" x="1904" y="552"/><use href="#c2" x="1904" y="575"/><use href="#c1" x="1904" y="597"/><use href="#c2" x="1904" y="618"/><use href="#c5" x="1904" y="648"/><use href="#c6" x="1904" y="668"/></g>
<path d="M1895 633h21" stroke="#aaa"/>
<text x="1896" y="651" class="mono" fill="#222" style="font-size:9px">ABC</text>
<circle cx="1924" cy="611" r="23" fill="#cfd0cf"/>
<circle cx="1924" cy="611" r="20" fill="url(#grn)"/>
<text x="1907" y="616" fill="#fff" class="mono" style="font-size:13px;font-weight:bold">57</text>

<!-- tabs/h-scroll -->
<rect x="31" y="939" width="1856" height="16" fill="#eee"/>
<rect x="31" y="939" width="1856" height="1" fill="#ddd"/>
<rect x="31" y="955" width="1856" height="2" fill="#fafafa"/>
<g fill="#e4e4e4" stroke="#aaa"><rect x="31.500" y="940.500" width="14" height="14"/><rect x="46.500" y="940.500" width="13" height="14"/><rect x="60.500" y="940.500" width="13" height="14"/><rect x="74.500" y="940.500" width="13" height="14"/></g>
<path d="M42 944v7l-5-3.500zM36 944v7M57 944v7l-5-3.500zM64 944v7l5-3.500zM78 944v7l5-3.500zM84 944v7" fill="#555" stroke="#555"/>
<path d="M92 940h38l-5 15H97z" fill="#222a33"/>
<text x="98" y="952" fill="#fff">模型</text>
<path d="M131 955l6-15h38l-5 15M175 955l6-15h38l-5 15" fill="none" stroke="#444"/>
<text x="138" y="952" fill="#222">布局1</text>
<text x="184" y="952" fill="#222">布局2</text>
<rect x="1247" y="940" width="1" height="15" fill="#ccc"/>
<path d="M1260 944v7l-4-3.500zM1859 944v7l4-3.500z" fill="#444"/>
<rect x="1837" y="941" width="14" height="12" rx="1" fill="url(#btn)" stroke="#aaa"/>
<rect x="1868" y="939" width="1" height="16" fill="#ccc"/>

<!-- command area -->
<rect x="0" y="960" width="1916" height="41" fill="#c6c6c6"/>
<rect x="0" y="1000" width="1916" height="1" fill="#a5a5a5"/>
<rect x="0" y="1001" width="1916" height="17" fill="#fff"/>
<rect x="0" y="960" width="16" height="58" fill="#9c9c9c"/>
<path d="M2 963h9M2 965h9" stroke="#333" stroke-dasharray="1 1"/>
<text x="17" y="972" class="mono" fill="#1a1a1a" style="font-size:11.500px" textLength="556">85.952,-47.846|65.952,-47.846|65.952,-159.846|125.952,-167.982|185.952,-159.846|</text>
<text x="17" y="987" class="mono" fill="#1a1a1a" style="font-size:11.500px" textLength="447">185.952,-99.846|165.952,-99.846|165.952,-139.846|85.952,-139.846</text>

<!-- status bar -->
<rect x="0" y="1018" width="1916" height="23" fill="url(#st)"/>
<rect x="0" y="1018" width="1916" height="1" fill="#222"/>
<text x="11" y="1034" class="mono" fill="#222" style="font-size:11px" textLength="169">2133.6294, 1403.1093, 0.0000</text>
<g stroke="#666" fill="#a8a8a8">
<rect x="217.500" y="1019.500" width="22" height="21"/><rect x="239.500" y="1019.500" width="22" height="21"/><rect x="262" y="1019.500" width="22" height="21" fill="url(#on)"/><rect x="284" y="1019.500" width="21" height="21" fill="url(#on)"/><rect x="305.500" y="1019.500" width="22" height="21"/><rect x="327.500" y="1019.500" width="22" height="21" fill="url(#on)"/><rect x="349.500" y="1019.500" width="22" height="21"/><rect x="371.500" y="1019.500" width="22" height="21" fill="url(#on)"/><rect x="393.500" y="1019.500" width="22" height="21" fill="url(#on)"/><rect x="415.500" y="1019.500" width="22" height="21" fill="url(#on)"/><rect x="437.500" y="1019.500" width="22" height="21"/><rect x="459.500" y="1019.500" width="22" height="21" fill="url(#on)"/><rect x="481.500" y="1019.500" width="22" height="21"/><rect x="503.500" y="1019.500" width="22" height="21"/>
</g>
<g class="i">
<use href="#s1" x="228" y="1030"/><use href="#s2" x="250" y="1030"/><use href="#s3" x="273" y="1030"/><use href="#s4" x="295" y="1030"/><use href="#s5" x="316" y="1030"/><use href="#s6" x="339" y="1030"/><use href="#s7" x="361" y="1030"/><use href="#s8" x="382" y="1030"/><use href="#s9" x="405" y="1030"/><use href="#s10" x="426" y="1030"/><use href="#s11" x="448" y="1030"/><use href="#s13" x="492" y="1030"/><use href="#s14" x="514" y="1030"/>
</g>
<rect x="463" y="1022" width="15" height="15" fill="#7fb0e8" stroke="#1a6ac0"/>
<!-- right status -->
<g stroke="#666" fill="#a8a8a8">
<rect x="1592.500" y="1019.500" width="29" height="21"/><rect x="1621.500" y="1019.500" width="22" height="21"/><rect x="1643.500" y="1019.500" width="22" height="21"/><rect x="1683.500" y="1019.500" width="54" height="21"/><rect x="1737.500" y="1019.500" width="22" height="21"/><rect x="1759.500" y="1019.500" width="22" height="21"/><rect x="1787.500" y="1019.500" width="22" height="21"/><rect x="1809.500" y="1019.500" width="22" height="21"/><rect x="1831.500" y="1019.500" width="22" height="21"/><rect x="1853.500" y="1019.500" width="32" height="21" fill="#777"/><rect x="1885.500" y="1019.500" width="13" height="21"/><rect x="1898.500" y="1019.500" width="18" height="21"/>
</g>
<text x="1594" y="1035" fill="#111" style="font-size:13px">模型</text>
<g class="i">
<rect x="1625" y="1023" width="14" height="11" fill="#ddd"/><path d="M1628 1032v-7l6 7z"/><path d="M1624 1037h16" stroke-width="1.500"/>
<rect x="1647" y="1023" width="7" height="9" fill="#eee"/><rect x="1655" y="1023" width="7" height="9" fill="#eee"/><path d="M1647 1036h15" stroke-width="2"/>
<use href="#an" x="1695" y="1030"/><use href="#an" x="1747" y="1030"/><use href="#an" x="1770" y="1030"/><use href="#gear" x="1798" y="1030"/>
<rect x="1813" y="1027" width="9" height="9" fill="#eee"/><path d="M1818 1027v-3q0-3 3-3t3 3v2"/>
<rect x="1835" y="1024" width="14" height="8" fill="#89939c"/><circle cx="1847" cy="1033" r="3" fill="#f0a020" stroke="#d06010"/>
<rect x="1902" y="1022" width="12" height="16" fill="#eee"/><rect x="1902" y="1022" width="12" height="3" fill="#777"/>
</g>
<rect x="1855" y="1021" width="29" height="18" fill="#8b8b8b" opacity=".35"/>
<use href="#bulb" x="1869" y="1030" class="i"/>
<text x="1704" y="1035" fill="#111" style="font-size:11px">1:1</text>
<path d="M1723 1026h7l-3.500 4zM1888 1030h7l-3.500 4z" fill="#111"/>
<circle cx="1753" cy="1033" r="3" fill="#f5b020" stroke="#d06010"/>

<!-- dialog -->
<rect x="1129.500" y="341.500" width="574" height="382" rx="6" fill="#2a3340" stroke="#b4bcc6"/>
<path d="M1135 345h160v23h-160z" fill="url(#glow)"/>
<rect x="1134.500" y="368.500" width="563.500" height="348.500" fill="#fff" stroke="#b4bcc6"/>
<rect x="1135.500" y="369.500" width="561.500" height="346.500" fill="#fff" stroke="#25303c"/>
<rect x="1138" y="347" width="14" height="16" fill="#c8c8c8"/><path d="M1138 356l5-9h3l4 9h-3l-1-3h-3l-2 3z" fill="#c02020"/>
<text x="1158" y="359" fill="#111">生成XML文件</text>
<path d="M1596.500 341.500v14q0 5 5 5h92q5 0 5-5v-14z" fill="url(#wb)" stroke="#b4bcc6"/>
<path d="M1651 342h47v13q0 5-5 5h-42z" fill="url(#wr)"/>
<path d="M1624.500 342v18M1651 342v18" stroke="#b4bcc6"/>
<rect x="1605" y="351" width="11" height="3" fill="#eee"/>
<rect x="1633" y="347" width="9" height="8" fill="none" stroke="#eee" stroke-width="2"/>
<path d="M1670 345l9 11M1679 345l-9 11" stroke="#fff" stroke-width="2.800"/>

<!-- radios -->
<g>
<circle cx="1165" cy="388.500" r="5.500" fill="url(#radio)" stroke="#8a8f94"/><circle cx="1165" cy="388.500" r="3" fill="url(#radon)"/>
<circle cx="1225" cy="388.500" r="5.500" fill="url(#radio)" stroke="#8a8f94"/>
<circle cx="1285" cy="388.500" r="5.500" fill="url(#radio)" stroke="#8a8f94"/>
<circle cx="1345" cy="388.500" r="5.500" fill="url(#radio)" stroke="#8a8f94"/>
<circle cx="1415" cy="388.500" r="5.500" fill="url(#radio)" stroke="#8a8f94"/>
<circle cx="1285" cy="418.500" r="5.500" fill="url(#radio)" stroke="#8a8f94"/><circle cx="1285" cy="418.500" r="3" fill="url(#radon)"/>
<circle cx="1345" cy="418.500" r="5.500" fill="url(#radio)" stroke="#8a8f94"/>
<circle cx="1415" cy="418.500" r="5.500" fill="url(#radio)" stroke="#8a8f94"/>
</g>
<g fill="#111">
<text x="1175" y="393">台面</text><text x="1235" y="393">顶线</text><text x="1295" y="393">灯线</text><text x="1355" y="393">天花线</text><text x="1425" y="393">趟门线</text>
<text x="1213" y="423">拉伸方向</text><text x="1295" y="423">X</text><text x="1355" y="423">Y</text><text x="1425" y="423">Z</text>
</g>
<rect x="1526.500" y="380.500" width="73" height="21" rx="3" fill="url(#btnb)" stroke="#1d9ad6" stroke-width="1.400"/>
<rect x="1529" y="383" width="68" height="16" fill="none" stroke="#333" stroke-dasharray="1 1"/>
<text x="1551" y="396" fill="#111">保存</text>
<rect x="1620" y="381" width="74" height="21" fill="url(#btn)"/>
<rect x="1618.500" y="379.500" width="77" height="22" fill="none" stroke="#f23030" stroke-width="3"/>
<text x="1644" y="396" fill="#111">退出</text>

<!-- text box -->
<rect x="1146.500" y="435.500" width="546" height="267" fill="#fff" stroke="#dfe4ea"/>
<rect x="1146" y="435" width="547" height="1" fill="#a8abb6"/>
<g fill="#111">
<text x="1152" y="451" textLength="227">&lt;CabinetTable bLine="true" Type="X"&gt;</text>
<text x="1159" y="467" textLength="453">&lt;Path value="85.952,-47.846|65.952,-47.846|65.952,-159.846|125.952,-167.982|</text>
<text x="1151" y="482" textLength="504">185.952,-159.846|185.952,-99.846|165.952,-99.846|165.952,-139.846|85.952,-139.846" /&gt;</text>
<text x="1152" y="498" textLength="96">&lt;/CabinetTable&gt;</text>
</g>
<text x="1512" y="532" fill="#f83838" style="font-family:'Liberation Serif','Noto Serif CJK SC',serif;font-size:26.500px">点击退出即可</text>
</svg>
</body></html>
